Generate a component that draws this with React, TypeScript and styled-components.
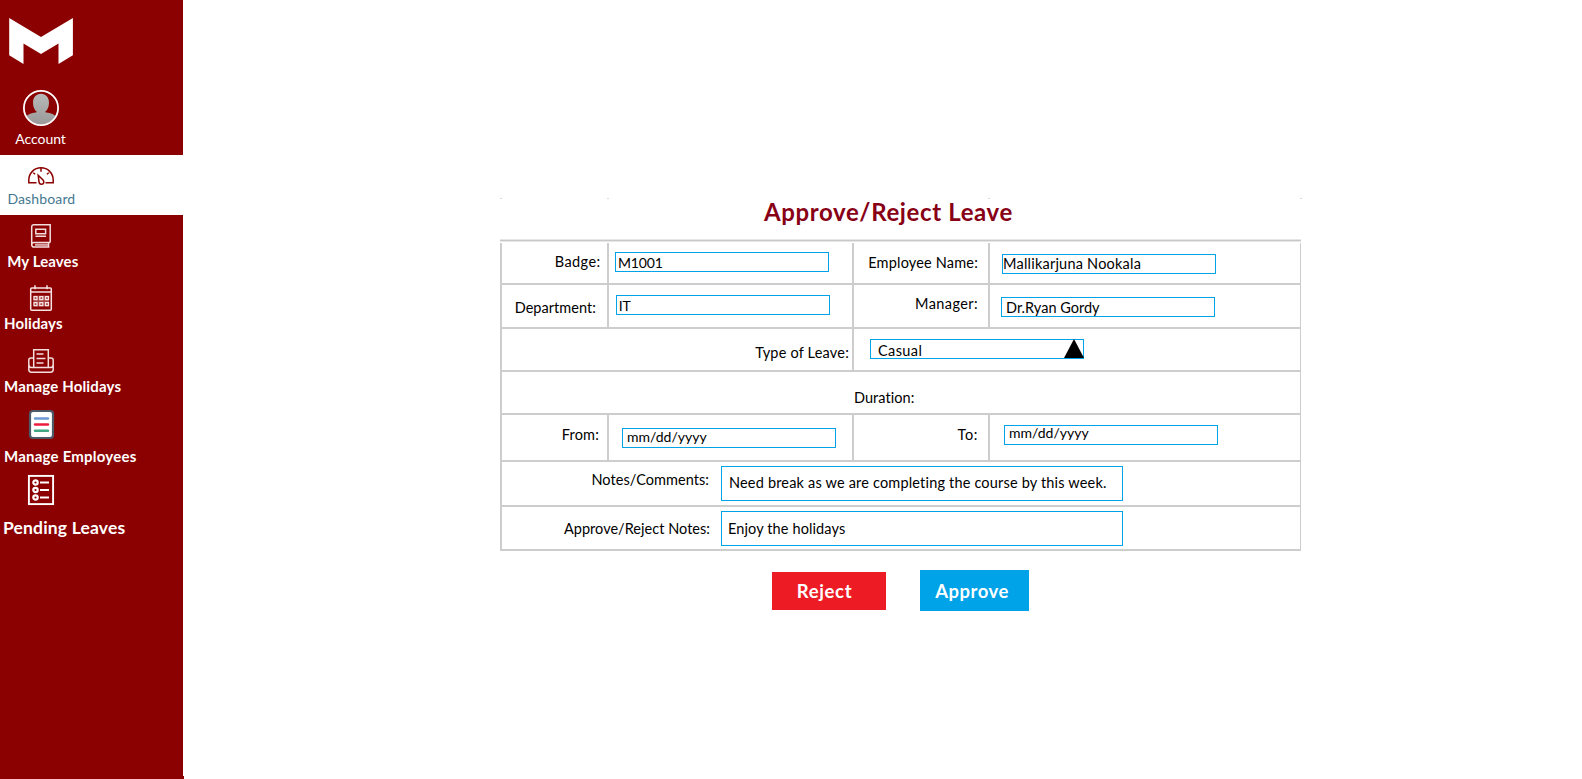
import React from "react";
import styled, { createGlobalStyle } from "styled-components";

const GlobalStyle = createGlobalStyle`
  * { box-sizing: border-box; }
  body { margin: 0; background: #fff; font-family: Lato, "Open Sans", sans-serif; }
`;

const rule = "#cdcdcd";

const Page = styled.div`
  display: flex;
  height: 779px;
  overflow: hidden;
`;

const Sidebar = styled.nav`
  display: flex;
  flex-direction: column;
  flex: none;
  width: 183px;
  background: #8b0000;
  color: #fff;
  box-shadow: 1px 776px 0 #8b0000;
`;

const LogoArea = styled.div`
  height: 90px;
  padding: 18px 0 0 9px;
  svg { display: block; }
`;

const NavItem = styled.a<{ $height: number; $top: number; $active?: boolean }>`
  display: flex;
  flex-direction: column;
  flex: none;
  height: ${(p) => p.$height}px;
  padding-top: ${(p) => p.$top}px;
  background: ${(p) => (p.$active ? "#fff" : "transparent")};
  color: ${(p) => (p.$active ? "#44788f" : "#fff")};
`;

const IconSlot = styled.span<{ $gap: number }>`
  display: flex;
  justify-content: center;
  width: 82px;
  margin-bottom: ${(p) => p.$gap}px;
  svg { display: block; overflow: visible; }
`;

const NavText = styled.span<{ $indent: number; $size?: number; $light?: boolean; $track?: number }>`
  padding-left: ${(p) => p.$indent}px;
  font-size: ${(p) => p.$size ?? 15}px;
  font-weight: ${(p) => (p.$light ? 400 : 700)};
  letter-spacing: ${(p) => p.$track ?? 0}px;
  line-height: 20px;
  white-space: nowrap;
`;

const Main = styled.main`
  flex: 1;
  padding: 198px 0 0 317px;
`;

const TickRow = styled.div`
  display: grid;
  grid-template-columns: 107px 381px 312px 1px;
  width: 801px;
  height: 1px;
  span { width: 2px; background: #dcdcdc; }
`;

const Title = styled.h1`
  margin: 0;
  height: 40px;
  padding-left: 264px;
  color: #880015;
  font-size: 24px;
  font-weight: 700;
  letter-spacing: 0.62px;
  line-height: 25px;
  white-space: nowrap;
`;

const HeaderRule = styled.div`
  width: 801px;
  height: 3px;
  margin-bottom: 1px;
  background: linear-gradient(#e6e6e6 0 1px, #c8c8c8 1px 2px, #e6e6e6 2px);
`;

const layouts = {
  pair: "107px 245px 136px 1fr",
  half: "352px 1fr",
  full: "1fr",
  notes: "221px 1fr",
};

const Row = styled.div<{ $layout: keyof typeof layouts; $height: number }>`
  display: grid;
  grid-template-columns: ${(p) => layouts[p.$layout]};
  width: 801px;
  height: ${(p) => p.$height}px;
  border-right: 1px solid ${rule};
  border-bottom: 2px solid ${rule};
`;

const Cell = styled.div<{ $open?: boolean }>`
  display: flex;
  align-items: flex-start;
  border-left: ${(p) => (p.$open ? 0 : 2)}px solid ${rule};
`;

const Label = styled.label<{ $top: number; $end?: number; $start?: number; $track?: number }>`
  margin-left: ${(p) => (p.$start !== undefined ? `${p.$start}px` : "auto")};
  padding: ${(p) => p.$top}px ${(p) => p.$end ?? 0}px 0 0;
  color: #000;
  font-size: 14.5px;
  letter-spacing: ${(p) => p.$track ?? 0}px;
  line-height: 22px;
  white-space: nowrap;
`;

const Field = styled.div<{ $left?: number; $top: number; $large?: boolean }>`
  display: flex;
  align-items: flex-start;
  justify-content: space-between;
  width: ${(p) => (p.$large ? 402 : 214)}px;
  height: ${(p) => (p.$large ? 35 : 20)}px;
  margin: ${(p) => p.$top}px 0 0 ${(p) => p.$left ?? 0}px;
  border: 1px solid #00a2e8;
`;

const Value = styled.span<{ $indent: number; $drop: number; $track?: number; $size?: number }>`
  margin-top: ${(p) => p.$drop}px;
  padding-left: ${(p) => p.$indent}px;
  color: #000;
  font-size: ${(p) => p.$size ?? 14.5}px;
  letter-spacing: ${(p) => p.$track ?? 0}px;
  line-height: 22px;
  white-space: nowrap;
`;

const Arrow = styled.svg`
  display: block;
  flex: none;
  margin: -1px -1px 0 0;
`;

const Actions = styled.div`
  display: flex;
  gap: 34px;
  padding: 19px 0 0 272px;
`;

const Button = styled.button<{ $kind: "reject" | "approve" }>`
  width: ${(p) => (p.$kind === "reject" ? 114 : 109)}px;
  height: ${(p) => (p.$kind === "reject" ? 38 : 41)}px;
  margin-top: ${(p) => (p.$kind === "reject" ? 2 : 0)}px;
  padding: ${(p) => (p.$kind === "reject" ? "0 9px 0 0" : "1px 5px 0 0")};
  border: 0;
  background: ${(p) => (p.$kind === "reject" ? "#ed1c24" : "#00a2e8")};
  color: #fff;
  font: 700 18.5px/22px Lato, sans-serif;
  letter-spacing: ${(p) => (p.$kind === "reject" ? 0.64 : 0.5)}px;
`;

const Logo = () => (
  <svg width="65" height="47" viewBox="0 0 65 47" fill="#fff">
    <path d="M.2 0 32 19 63.9 0V37.2L49.5 46V25.5L32 36 14.5 25.5V46L.2 37.2Z" />
  </svg>
);

const Avatar = () => (
  <svg width="36" height="36" viewBox="0 0 36 36">
    <defs>
      <clipPath id="face"><circle cx="18" cy="18" r="16.5" /></clipPath>
      <linearGradient id="grey" x1="0" y1="0" x2="0" y2="1">
        <stop offset="0" stopColor="#b8b8b8" /><stop offset="1" stopColor="#989898" />
      </linearGradient>
    </defs>
    <g clipPath="url(#face)" fill="url(#grey)">
      <path d="M18 3.800c4.800 0 8 3.700 8 9 0 4-1.600 7.500-4 9.300 1.200.6 4.500.7 7.500 2 3 1.300 5.500 4 6.500 12H0c1-8 3.500-10.700 6.500-12 3-1.300 6.300-1.400 7.500-2-2.400-1.800-4-5.300-4-9.300 0-5.300 3.200-9 8-9Z" />
    </g>
    <circle cx="18" cy="18" r="17.100" fill="none" stroke="#fff" strokeWidth="1.800" />
  </svg>
);

const Gauge = () => (
  <svg width="26" height="18" viewBox="0 0 26 18" fill="none" stroke="#8b0000" strokeWidth="1.500">
    <path d="M8.500 15.800H.8V13C.8 6.200 6.200.8 13 .8S25.200 6.200 25.200 13v2.800h-7.700" />
    <path d="M13 1v3.800M5.200 5.700l1.900 1.600M20.800 5.700l-1.900 1.600" />
    <path d="M10.200 8.200l.8 6.700c.2 1.800 1 2.400 2.300 2.400 1.600 0 2.500-1.100 2.500-2.300 0-.8-.4-1.500-1-2.200Z" />
  </svg>
);

const Book = () => (
  <svg width="20" height="24" viewBox="0 0 20 24" fill="none" stroke="#f3dede" strokeWidth="1.500">
    <path d="M19.200 18.500V.7H3C1.600.7.7 1.600.7 3v17.500c0 1.600 1 2.600 2.500 2.600h15.200M19.200 18.500H3C1.600 18.500.8 19.300.8 20.500M17.500 18.500v4.500" />
    <path d="M4.800 5.200h9.800v4.500H4.800zM4.500 12.200h10.500" />
    <path d="M4 20.800h13" stroke="#d9a3a3" strokeWidth="2.200" />
  </svg>
);

const Calendar = () => (
  <svg width="22" height="26" viewBox="0 0 22 26" fill="none" stroke="#f6e4e4" strokeWidth="1.500">
    <rect x=".7" y="3" width="20.600" height="22.200" rx="1" />
    <path d="M1 7h20M5 .3v4M17 .3v4" />
    <path d="M3.500 10.500h15.500v11H3.500z" fill="#a94444" stroke="none" />
    <path d="M4 11.700h3v3H4zM9.800 11.700h3v3h-3zM15.500 11.700h3v3h-3zM4 17.700h3v3H4zM9.800 17.700h3v3h-3zM15.500 17.700h3v3h-3z" strokeWidth="1.300" />
  </svg>
);

const Tray = () => (
  <svg width="26" height="24" viewBox="0 0 26 24" fill="none" stroke="#f3dede" strokeWidth="1.500">
    <path d="M5.700 18.500V.7h14.600v17.800M5.500 9H3C1.600 9 .8 9.800.8 11v9.500c0 1.700 1 2.700 2.600 2.700h19.200c1.600 0 2.600-1 2.600-2.700V11c0-1.200-.8-2-2.200-2h-2.500M.8 15.500c0 2 1 3 2.700 3h19c1.700 0 2.700-1 2.700-3" />
    <path d="M8.500 5h7M8.500 9.500h9M8.500 14h7" />
  </svg>
);

const Sheet = () => (
  <svg width="25" height="29" viewBox="0 0 25 29">
    <rect x="1" y="1" width="23" height="27" rx="3" fill="#fff" stroke="#4d5a68" strokeWidth="2.200" />
    <g fill="none" strokeWidth="2.400" strokeLinecap="round">
      <path d="M6 8.500h13" stroke="#6c98d5" />
      <path d="M6 14.500h13" stroke="#ed1c3c" />
      <path d="M6 20.700h13" stroke="#40a580" />
    </g>
  </svg>
);

const Checklist = () => (
  <svg width="26" height="30" viewBox="0 0 26 30" fill="none" stroke="#fff">
    <rect x=".9" y=".9" width="24.200" height="28.200" strokeWidth="1.900" />
    <g strokeWidth="2.200">
      <circle cx="7.500" cy="7.500" r="2.200" /><circle cx="7.500" cy="15" r="2.200" /><circle cx="7.500" cy="22.500" r="2.200" />
    </g>
    <path d="M12 7.500h9M12 15h9M12 22.500h9" strokeWidth="1.900" />
  </svg>
);

export default function App() {
  return (
    <>
      <GlobalStyle />
      <Page>
        <Sidebar>
          <LogoArea><Logo /></LogoArea>
          <NavItem $height={65} $top={0}>
            <IconSlot $gap={3}><Avatar /></IconSlot>
            <NavText $indent={15.3} $size={14} $track={-0.06} $light>Account</NavText>
          </NavItem>
          <NavItem $height={60} $top={12} $active>
            <IconSlot $gap={4}><Gauge /></IconSlot>
            <NavText $indent={7.4} $size={14} $track={0.14} $light>Dashboard</NavText>
          </NavItem>
          <NavItem $height={62} $top={9}>
            <IconSlot $gap={3}><Book /></IconSlot>
            <NavText $indent={7.2} $track={0.1}>My Leaves</NavText>
          </NavItem>
          <NavItem $height={62} $top={8}>
            <IconSlot $gap={2}><Calendar /></IconSlot>
            <NavText $indent={4} $track={0.12}>Holidays</NavText>
          </NavItem>
          <NavItem $height={62} $top={10}>
            <IconSlot $gap={3}><Tray /></IconSlot>
            <NavText $indent={4} $track={0.16}>Manage Holidays</NavText>
          </NavItem>
          <NavItem $height={66} $top={9}>
            <IconSlot $gap={7}><Sheet /></IconSlot>
            <NavText $indent={4} $track={0.22}>Manage Employees</NavText>
          </NavItem>
          <NavItem $height={80} $top={8}>
            <IconSlot $gap={13}><Checklist /></IconSlot>
            <NavText $indent={3} $size={17.5} $track={0.16}>Pending Leaves</NavText>
          </NavItem>
        </Sidebar>

        <Main>
          <TickRow><span /><span /><span /><span /></TickRow>
          <Title>Approve/Reject Leave</Title>
          <HeaderRule />

          <Row $layout="pair" $height={42}>
            <Cell><Label $top={8} $end={6.5} $track={0.41}>Badge:</Label></Cell>
            <Cell><Field $left={6} $top={9}><Value $indent={1.9} $drop={-1} $size={14} $track={-0.1}>M1001</Value></Field></Cell>
            <Cell><Label $top={9} $end={10} $track={0.18}>Employee Name:</Label></Cell>
            <Cell><Field $left={12} $top={11}><Value $indent={0} $drop={-2} $track={0.22}>Mallikarjuna Nookala</Value></Field></Cell>
          </Row>
          <Row $layout="pair" $height={44}>
            <Cell><Label $top={12} $end={11} $track={0.05}>Department:</Label></Cell>
            <Cell><Field $left={7} $top={10}><Value $indent={1.7} $drop={-1} $size={14} $track={0}>IT</Value></Field></Cell>
            <Cell><Label $top={8} $end={10} $track={0.4}>Manager:</Label></Cell>
            <Cell><Field $left={11} $top={12}><Value $indent={4} $drop={-1} $track={0}>Dr.Ryan Gordy</Value></Field></Cell>
          </Row>
          <Row $layout="half" $height={43}>
            <Cell><Label $top={13} $end={3} $track={0.2}>Type of Leave:</Label></Cell>
            <Cell>
              <Field $left={16} $top={10}>
                <Value $indent={7} $drop={0} $track={0.4}>Casual</Value>
                <Arrow width="20" height="19" viewBox="0 0 20 19"><path d="M10 0 20 19H0Z" /></Arrow>
              </Field>
            </Cell>
          </Row>
          <Row $layout="full" $height={43}>
            <Cell><Label $top={15} $start={352} $track={0.05}>Duration:</Label></Cell>
          </Row>
          <Row $layout="pair" $height={47}>
            <Cell><Label $top={9} $end={8} $track={0.17}>From:</Label></Cell>
            <Cell><Field $left={13} $top={13}><Value $indent={4} $drop={-3} $size={14} $track={0.01}>mm/dd/yyyy</Value></Field></Cell>
            <Cell><Label $top={9} $end={10} $track={0.6}>To:</Label></Cell>
            <Cell><Field $left={14} $top={10}><Value $indent={4} $drop={-4} $size={14} $track={0.01}>mm/dd/yyyy</Value></Field></Cell>
          </Row>
          <Row $layout="notes" $height={45}>
            <Cell><Label $top={7} $end={12} $track={0.05}>Notes/Comments:</Label></Cell>
            <Cell $open><Field $large $top={4}><Value $indent={7} $drop={4.5} $track={0.18}>Need break as we are completing the course by this week.</Value></Field></Cell>
          </Row>
          <Row $layout="notes" $height={44}>
            <Cell><Label $top={11} $end={11} $track={0.03}>Approve/Reject Notes:</Label></Cell>
            <Cell $open><Field $large $top={4}><Value $indent={6} $drop={5.5} $track={0.12}>Enjoy the holidays</Value></Field></Cell>
          </Row>

          <Actions>
            <Button $kind="reject">Reject</Button>
            <Button $kind="approve">Approve</Button>
          </Actions>
        </Main>
      </Page>
    </>
  );
}
